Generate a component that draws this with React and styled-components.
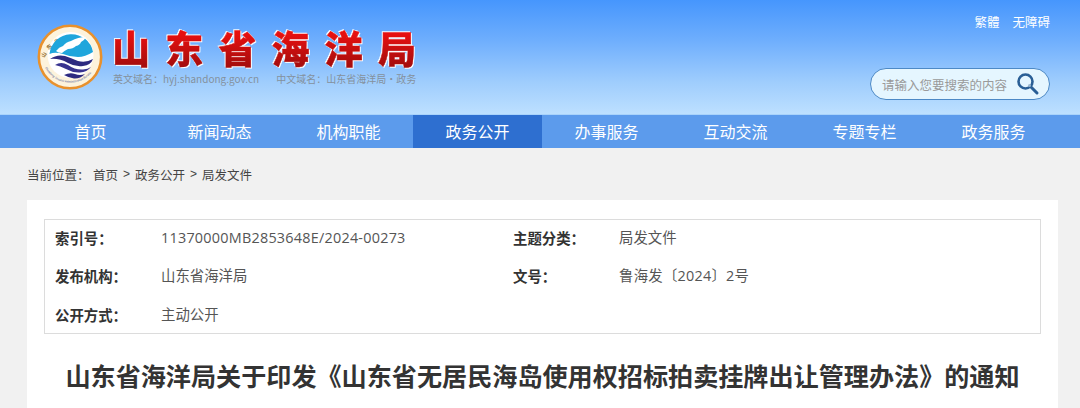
import React from "react";
import styled, { createGlobalStyle } from "styled-components";

const Global = createGlobalStyle`
  html, body { margin: 0; padding: 0; background: #f1f1f1; overflow: hidden; }
  body { font-family: "Noto Sans CJK SC", "Liberation Sans", sans-serif; }
  * { box-sizing: border-box; }
`;

const Page = styled.div`
  width: 1080px;
  height: 408px;
  overflow: hidden;
  background: #f1f1f1;
`;

const Header = styled.header`
  height: 115px;
  padding: 0 30px 0 37px;
  display: flex;
  justify-content: space-between;
  background: linear-gradient(#4696fd 0%, #6eaefd 35%, #9fcdfd 72%, #bde0ff 100%);
  border-bottom: 1px solid #a9d3fb;
`;

const Brand = styled.div`
  display: flex;
  align-items: flex-start;
  padding-top: 24px;
  gap: 9px;
`;

const BrandText = styled.div`
  display: flex;
  flex-direction: column;
  margin-top: -2px;
`;

const SiteTitle = styled.h1`
  margin: 0;
  height: 50px;
  font-size: 38px;
  line-height: 50px;
  font-weight: 900;
  letter-spacing: 15.2px;
  white-space: nowrap;
  color: transparent;
  -webkit-text-stroke: 0.5px transparent;
  background: linear-gradient(#e61010 25%, #a80d0d 85%);
  -webkit-background-clip: text;
  background-clip: text;
  filter: drop-shadow(1px 1px 0 #fff) drop-shadow(-1px -1px 0 #fff);
`;

const Domains = styled.div`
  display: flex;
  gap: 17px;
  padding-left: 1px;
  font-size: 10px;
  line-height: 13px;
  color: #84919e;
  white-space: nowrap;
`;

const Tools = styled.div`
  display: flex;
  flex-direction: column;
  align-items: flex-end;
`;

const ToolLinks = styled.div`
  display: flex;
  gap: 13px;
  margin: 14px 0 0;
  height: 54px;
  line-height: 16px;
  font-size: 12.5px;
  color: #fff;
`;

const Search = styled.div`
  width: 180px;
  height: 32px;
  padding: 0 9px 0 11px;
  display: flex;
  align-items: center;
  justify-content: space-between;
  border: 1px solid #4c89c6;
  border-radius: 16px;
  background: #e5f6ff;
  font-size: 12.5px;
  color: #9a9a9a;
  white-space: nowrap;
`;

const Nav = styled.nav`
  height: 33px;
  padding-left: 26px;
  display: flex;
  background: #5c9bec;
`;

const NavItem = styled.a`
  width: 129px;
  text-align: center;
  font-size: 16px;
  line-height: 33px;
  color: #fff;
  background: ${(p) => (p.$active ? "#2e6fd0" : "transparent")};
`;

const Crumbs = styled.div`
  height: 52px;
  padding: 0 0 0 27px;
  display: flex;
  align-items: center;
  font-size: 12.5px;
  color: #444;
  white-space: nowrap;
`;

const CrumbLabel = styled.span`
  width: 66px;
`;

const CrumbSep = styled.span`
  margin: 0 5px;
  font-family: "Liberation Sans", sans-serif;
  font-size: 12px;
`;

const Card = styled.main`
  margin: 0 22px 0 27px;
  height: 240px;
  padding: 19px 17px 0;
  background: #fff;
`;

const Meta = styled.section`
  height: 115px;
  padding: 8px 0 0 10px;
  display: grid;
  grid-template-columns: 106px 352px 106px 1fr;
  grid-auto-rows: 38.3px;
  align-items: start;
  border: 1px solid #dcdcdc;
  font-family: "Open Sans", "Noto Sans CJK SC", sans-serif;
  font-size: 14.4px;
  line-height: 20px;
`;

const Label = styled.div`
  font-family: "Noto Sans CJK SC", sans-serif;
  font-weight: 700;
  color: #333;
`;

const Value = styled.div`
  color: #555;
  letter-spacing: ${(p) => (p.$latin ? "0.24px" : "0")};
`;

const Title = styled.h2`
  margin: 23px 0 0;
  text-align: center;
  font-size: 25.12px;
  line-height: 36px;
  font-weight: 700;
  color: #333;
  white-space: nowrap;
`;

const Logo = () => (
  <svg width="66" height="66" viewBox="0 0 66 66">
    <defs>
      <path id="ringTop" d="M6.5 38 A27 27 0 0 1 59.5 38" />
      <path id="ringBottom" d="M5.5 36 A28 28 0 0 0 60.5 36" />
    </defs>
    <circle cx="33" cy="33" r="31.2" fill="#fdf3dc" stroke="#e8912d" strokeWidth="2.6" />
    <circle cx="33.5" cy="31" r="23" fill="#fff" />
    <text fontSize="5.2" fontWeight="700" fill="#8f6a2c" letterSpacing="3.7">
      <textPath href="#ringTop" startOffset="4">山东省海洋局</textPath>
    </text>
    <text fontSize="2.8" fill="#3b4a8c">
      <textPath href="#ringBottom" startOffset="8">Shandong Oceanic Administration Bureau</textPath>
    </text>
    <path d="M12.5 30 A22 22 0 0 1 56 28 Q48 33 41 33 Q33 33 26 30 Q18 27.5 12.5 30 Z" fill="#1fa6dc" />
    <path d="M19 27 Q22 23 26 22 Q29 18 34 17 Q41 13 49 13 Q47 17 44 18 Q43 21 39 22 Q36 25 31 25 Q27 27 25 29 Q21 29 19 27 Z" fill="#fff" />
    <path d="M13 35 Q20 30 28 32 Q34 34 41 37 Q49 39 56 35 Q54 41 46 42 Q38 43 31 39 Q22 34 13 35 Z" fill="#2d2a80" />
    <path d="M18 41 Q24 37 31 41 Q38 46 46 45.5 Q51 45 54 43 Q50 48 43 48.5 Q36 49 29 45 Q23 42 18 41 Z" fill="#38338f" />
    <path d="M27 51 Q33 48 38 50 Q43 52 48 50 Q43 55 37 54.5 Q32 54 27 51 Z" fill="#2d2a80" />
  </svg>
);

const SearchIcon = () => (
  <svg width="24" height="24" viewBox="0 0 24 24">
    <circle cx="9.5" cy="9.5" r="7" fill="#e5f6ff" stroke="#2a5f96" strokeWidth="2.6" />
    <path d="M14.5 14.5 L21 21" stroke="#2a5f96" strokeWidth="3" strokeLinecap="round" />
    <circle cx="13.5" cy="13.5" r="1.5" fill="#9db8d0" />
  </svg>
);

const navItems = ["首页", "新闻动态", "机构职能", "政务公开", "办事服务", "互动交流", "专题专栏", "政务服务"];

const meta = [
  ["索引号：", "11370000MB2853648E/2024-00273", "主题分类：", "局发文件"],
  ["发布机构：", "山东省海洋局", "文号：", "鲁海发〔2024〕2号"],
  ["公开方式：", "主动公开", "", ""],
];

export default function App() {
  return (
    <Page>
      <Global />
      <Header>
        <Brand>
          <Logo />
          <BrandText>
            <SiteTitle>山东省海洋局</SiteTitle>
            <Domains>
              <span>英文域名：hyj.shandong.gov.cn</span>
              <span>中文域名：山东省海洋局•政务</span>
            </Domains>
          </BrandText>
        </Brand>
        <Tools>
          <ToolLinks>
            <span>繁體</span>
            <span>无障碍</span>
          </ToolLinks>
          <Search>
            <span>请输入您要搜索的内容</span>
            <SearchIcon />
          </Search>
        </Tools>
      </Header>
      <Nav>
        {navItems.map((t, i) => (
          <NavItem key={t + i} $active={i === 3}>{t}</NavItem>
        ))}
      </Nav>
      <Crumbs>
        <CrumbLabel>当前位置：</CrumbLabel>
        <span>首页</span>
        <CrumbSep>&gt;</CrumbSep>
        <span>政务公开</span>
        <CrumbSep>&gt;</CrumbSep>
        <span>局发文件</span>
      </Crumbs>
      <Card>
        <Meta>
          {meta.map((row) =>
            row.map((c, i) =>
              i % 2 === 0 ? (
                <Label key={row[0] + i}>{c}</Label>
              ) : (
                <Value key={row[0] + i} $latin={/\d/.test(c)}>{c}</Value>
              )
            )
          )}
        </Meta>
        <Title>山东省海洋局关于印发《山东省无居民海岛使用权招标拍卖挂牌出让管理办法》的通知</Title>
      </Card>
    </Page>
  );
}
